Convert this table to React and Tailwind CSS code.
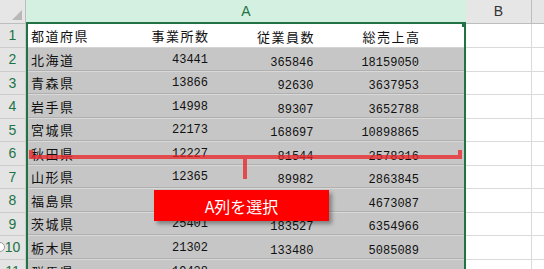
import React from 'react';

// rows of the sheet: text lives in column A, aligned like fixed-width columns
const ROWS = [
  { n: 1, h: 'h-[24px]', cells: ['都道府県', '事業所数', '従業員数', '総売上高'] },
  { n: 2, h: 'h-[24px]', cells: ['北海道', '43441', '365846', '18159050'] },
  { n: 3, h: 'h-[23px]', cells: ['青森県', '13866', '92630', '3637953'] },
  { n: 4, h: 'h-[24px]', cells: ['岩手県', '14998', '89307', '3652788'] },
  { n: 5, h: 'h-[23px]', cells: ['宮城県', '22173', '168697', '10898865'] },
  { n: 6, h: 'h-[24px]', cells: ['秋田県', '12227', '81544', '2578316'] },
  { n: 7, h: 'h-[23px]', cells: ['山形県', '12365', '89982', '2863845'] },
  { n: 8, h: 'h-[24px]', cells: ['福島県', '20593', '154466', '4673087'] },
  { n: 9, h: 'h-[23px]', cells: ['茨城県', '25401', '183527', '6354966'] },
  { n: 10, h: 'h-[24px]', cells: ['栃木県', '21302', '133480', '5085089'] },
  { n: 11, h: 'h-[24px]', cells: ['群馬県', '19438', '149096', '5096400'] },
];

const isNum = (s) => /^\d+$/.test(s);

const Txt = ({ children }) =>
  isNum(children) ? (
    <span className="font-['Liberation_Mono',monospace] text-[12px]">{children}</span>
  ) : (
    <span className="font-['Noto_Sans_CJK_JP',sans-serif] text-[13px] tracking-[1.5px] mr-[-1.5px]">{children}</span>
  );

const Row = ({ row }) => {
  const active = row.n === 1;
  return (
    <div className={`flex ${row.h}`}>
      <div className="w-[26px] shrink-0 bg-[#e4e4e4] border-r border-b border-[#cdcdcd] flex items-center justify-center text-[14px] text-[#217346] font-['Liberation_Sans',sans-serif]">
        {row.n}
      </div>
      <div className="w-[440px] shrink-0 border-x-2 border-[#217346]">
        <div
          className={`h-full flex items-center pl-[3px] text-[#111] border-b ${
            active ? 'bg-white border-[#d4d4d4]' : 'bg-[#c6c6c6] border-[#d9d9d9] shadow-[inset_0_-1px_0_#b0b0b0]'
          }`}
        >
          <div className="w-[177px] flex items-center justify-between">
            <Txt>{row.cells[0]}</Txt>
            <Txt>{row.cells[1]}</Txt>
          </div>
          <div className="w-[105.5px] text-right">
            <Txt>{row.cells[2]}</Txt>
          </div>
          <div className="w-[105.5px] text-right">
            <Txt>{row.cells[3]}</Txt>
          </div>
        </div>
      </div>
      <div className="w-[66px] shrink-0 bg-white border-r border-b border-[#dadada]" />
      <div className="flex-1 bg-white border-b border-[#dadada]" />
    </div>
  );
};

export default function App() {
  return (
    <div className="relative w-[544px] h-[269px] overflow-hidden bg-white">
      {/* column headers */}
      <div className="flex h-[24px]">
        <div className="w-[26px] shrink-0 bg-[#e6e6e6] border-r border-b border-[#bdbdbd] flex items-end justify-end p-[3px]">
          <svg width="10" height="10" viewBox="0 0 10 10">
            <polygon points="10,0 10,10 0,10" fill="#b8b8b8" />
          </svg>
        </div>
        <div className="w-[440px] shrink-0 bg-[#d3f0e0] border-b-2 border-[#217346] flex items-center justify-center text-[14px] text-[#217346] font-['Liberation_Sans',sans-serif]">
          A
        </div>
        <div className="w-[66px] shrink-0 bg-[#e6e6e6] border-r border-b border-[#bdbdbd] flex items-center justify-center text-[14px] text-[#333] font-['Liberation_Sans',sans-serif]">
          B
        </div>
        <div className="flex-1 bg-[#e6e6e6] border-b border-[#bdbdbd]" />
      </div>

      {ROWS.map((r) => (
        <Row key={r.n} row={r} />
      ))}

      {/* selection corner mark */}
      <div className="absolute left-[462px] top-[23px] w-[4px] h-[4px] bg-[#217346]" />

      {/* small handle on the left edge */}
      <div className="absolute left-[-5px] top-[242px] w-[10px] h-[10px] rounded-full bg-white border border-[#9a9a9a]" />

      {/* red bracket */}
      <svg className="absolute left-0 top-0 pointer-events-none" width="544" height="269" viewBox="0 0 544 269">
        <g fill="none" stroke="rgba(232,40,44,0.78)" strokeWidth="4">
          <path d="M31 150 V157 H460 V150" />
          <path d="M245 159 V179" />
        </g>
      </svg>

      {/* callout */}
      <div className="absolute left-[154px] top-[190px] w-[175px] h-[31px] bg-[#ff0000] shadow-[3px_3px_4px_rgba(0,0,0,0.35)] flex items-center justify-center text-white text-[16px] font-['Noto_Sans_CJK_JP',sans-serif]">
        A列を選択
      </div>
    </div>
  );
}
